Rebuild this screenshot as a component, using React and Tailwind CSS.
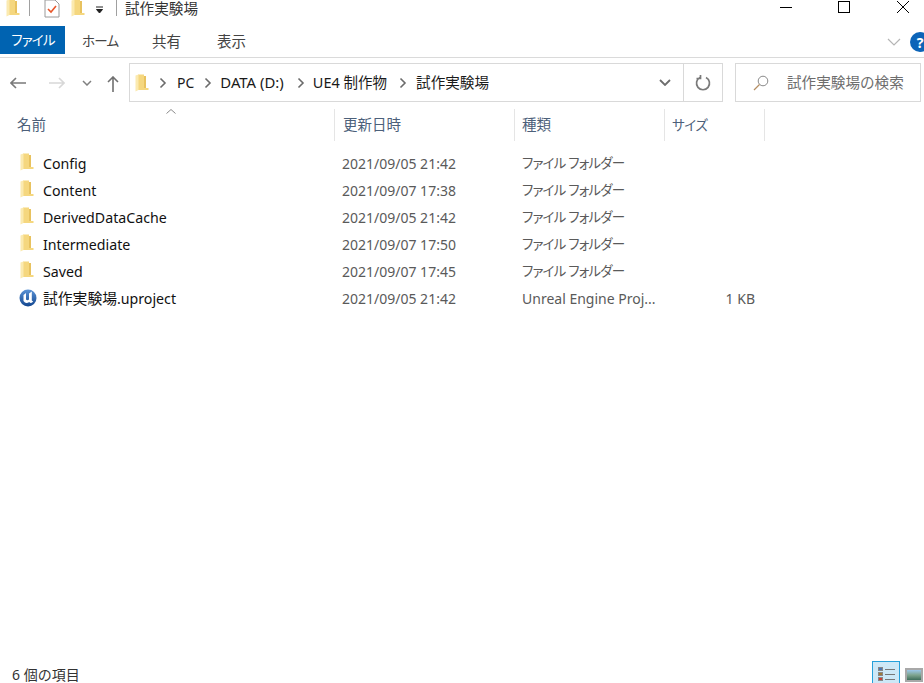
const font = { fontFamily: '"Noto Sans", "Noto Sans CJK JP", sans-serif' };

const rows = [
  { name: 'Config', date: '2021/09/05 21:42', type: 'ファイル フォルダー', kana: true },
  { name: 'Content', date: '2021/09/07 17:38', type: 'ファイル フォルダー', kana: true },
  { name: 'DerivedDataCache', date: '2021/09/05 21:42', type: 'ファイル フォルダー', kana: true },
  { name: 'Intermediate', date: '2021/09/07 17:50', type: 'ファイル フォルダー', kana: true },
  { name: 'Saved', date: '2021/09/07 17:45', type: 'ファイル フォルダー', kana: true },
  { name: '.uproject', prefix: '試作実験場', date: '2021/09/05 21:42', type: 'Unreal Engine Proj...', size: '1 KB', ue: true },
];

const Folder = ({ className = '' }) => (
  <svg viewBox="0 0 14 18" width="14" height="18" className={className}>
    <path d="M3 0.5 L9 0.5 L9 14 L13.5 14 L13.5 16 L3 16 Z" fill="#f5d77f" />
    <path d="M0.5 1.5 L3.5 0.5 L3.5 16 L0.5 17.5 Z" fill="#fbeab0" />
    <path d="M9 2 L11 2 L11 14 L9 14 Z" fill="#e8c25f" />
  </svg>
);

const UeIcon = () => (
  <svg viewBox="0 0 18 18" width="18" height="18">
    <defs>
      <linearGradient id="ue" x1="0" y1="0" x2="0" y2="1">
        <stop offset="0" stopColor="#5b93d6" />
        <stop offset="1" stopColor="#12468f" />
      </linearGradient>
    </defs>
    <circle cx="9" cy="9" r="8.5" fill="url(#ue)" />
    <path d="M4.5 6 L7 4 L7 10.5 Q8.4 12 10 10.5 L10 4.5 L12.8 2.6 L12.8 11.5 L14.2 12.6 Q12 15.2 10.2 13 Q6.8 15.4 4.5 12 Z" fill="#fff" />
  </svg>
);

const Chevron = () => (
  <svg viewBox="0 0 8 12" width="8" height="12" className="shrink-0">
    <path d="M1.5 1.5 L6 6 L1.5 10.5" fill="none" stroke="#6b6b6b" strokeWidth="1.6" />
  </svg>
);

const App = () => {
  return (
    <div className="w-[924px] h-[683px] bg-white overflow-hidden flex flex-col text-[14px] text-[#1a1a1a]" style={font}>
      {/* Title bar */}
      <div className="h-[26px] flex items-start shrink-0">
        <Folder className="ml-[6px] -mt-[1px]" />
        <div className="w-px h-[16px] bg-[#a0a0a0] ml-[9px]" />
        <svg viewBox="0 0 16 18" width="16" height="18" className="ml-[14px]">
          <path d="M1 0 L11 0 L15 4 L15 17 L1 17 Z" fill="#fff" stroke="#9a9a9a" />
          <path d="M4 9 L7 12 L12 6" fill="none" stroke="#e8562a" strokeWidth="1.6" />
        </svg>
        <Folder className="ml-[11px] -mt-[1px]" />
        <svg viewBox="0 0 8 8" width="8" height="8" className="ml-[11px] mt-[6px]">
          <path d="M0 1 H7 M0.5 3.5 H6.5 L3.5 7 Z" stroke="#222" fill="#222" strokeWidth="1" />
        </svg>
        <div className="w-px h-[16px] bg-[#a0a0a0] ml-[12px]" />
        <span className="ml-[8px] text-[14.6px] leading-[17px] text-[#333]">試作実験場</span>
        <div className="ml-auto flex items-start pt-[1px]">
          <div className="w-[12px] h-px bg-black mt-[6px] mr-[46px]" />
          <div className="w-[12px] h-[12px] border border-black mr-[47px]" />
          <svg viewBox="0 0 12 12" width="12" height="12" className="mr-[15px]">
            <path d="M0 0 L12 12 M12 0 L0 12" stroke="#000" strokeWidth="1" />
          </svg>
        </div>
      </div>

      {/* Ribbon tabs */}
      <div className="h-[32px] flex items-start border-b border-[#dadada] shrink-0">
        <div className="w-[62px] h-[28px] pr-[1px] box-content pl-[2px] bg-[#0063b1] text-white flex items-center justify-center text-[13.5px] tracking-[-0.8px] [font-feature-settings:'palt']">ファイル</div>
        <span className="w-[87px] pl-[17px] leading-[30px] text-[13.5px] tracking-[-0.8px] text-[#444] [font-feature-settings:'palt']">ホーム</span>
        <span className="w-[65px] leading-[30px] text-[14.5px] text-[#444]">共有</span>
        <span className="leading-[30px] text-[14.5px] text-[#444]">表示</span>
        <svg viewBox="0 0 14 8" width="14" height="8" className="ml-auto mt-[12px] mr-[9px]">
          <path d="M1 1 L7 7 L13 1" fill="none" stroke="#b5b5b5" strokeWidth="1.2" />
        </svg>
        <div className="w-[20px] h-[20px] rounded-full bg-[#0c64b8] text-white flex items-center justify-center text-[14px] font-bold mt-[6px] -mr-[6px]">?</div>
      </div>

      {/* Address bar */}
      <div className="h-[49px] flex items-center shrink-0">
        <svg viewBox="0 0 16 12" width="16" height="12" className="ml-[10px]">
          <path d="M6 1 L1 6 L6 11 M1 6 H16" fill="none" stroke="#7a7a7a" strokeWidth="1.6" />
        </svg>
        <svg viewBox="0 0 16 12" width="16" height="12" className="ml-[23px]">
          <path d="M10 1 L15 6 L10 11 M0 6 H15" fill="none" stroke="#d8d8d8" strokeWidth="1.6" />
        </svg>
        <svg viewBox="0 0 10 6" width="10" height="6" className="ml-[17px]">
          <path d="M1 1 L5 5 L9 1" fill="none" stroke="#808080" strokeWidth="1.5" />
        </svg>
        <svg viewBox="0 0 12 16" width="12" height="16" className="ml-[15px] mt-[3px]">
          <path d="M1 6 L6 1 L11 6 M6 1 V16" fill="none" stroke="#707070" strokeWidth="1.6" />
        </svg>
        <div className="ml-[10px] w-[594px] h-[39px] border border-[#d9d9d9] flex items-center">
          <Folder className="ml-[5px] shrink-0" />
          <div className="ml-[10px]"><Chevron /></div>
          <span className="ml-[10px]">PC</span>
          <div className="ml-[10px]"><Chevron /></div>
          <span className="ml-[8px] text-[14.9px]">DATA (D:)</span>
          <div className="ml-[13px]"><Chevron /></div>
          <span className="ml-[8px] text-[14.5px]">UE4 制作物</span>
          <div className="ml-[12px]"><Chevron /></div>
          <span className="ml-[9px] text-[14.6px]">試作実験場</span>
          <svg viewBox="0 0 12 7" width="12" height="7" className="ml-auto mr-[12px]">
            <path d="M1 1 L6 6 L11 1" fill="none" stroke="#6d6d6d" strokeWidth="1.8" />
          </svg>
          <div className="w-[39px] h-full border-l border-[#d9d9d9] flex items-center justify-center">
            <svg viewBox="0 0 16 16" width="16" height="16">
              <path d="M5 2.5 A6.5 6.5 0 1 0 11 2.5 M5.5 0 V3.5 H1.5" fill="none" stroke="#7a7a7a" strokeWidth="1.7" />
            </svg>
          </div>
        </div>
        <div className="ml-[12px] w-[186px] h-[39px] border border-[#d9d9d9] flex items-center">
          <svg viewBox="0 0 16 16" width="16" height="16" className="ml-[17px]">
            <circle cx="10" cy="6" r="4.8" fill="none" stroke="#8a8a8a" />
            <path d="M6.5 9.5 L1 15" stroke="#b58f63" strokeWidth="1.2" />
          </svg>
          <span className="ml-[18px] text-[#6d6d6d] text-[14.6px]">試作実験場の検索</span>
        </div>
      </div>

      {/* Column headers */}
      <div className="h-[32px] mt-[2px] flex items-center text-[#4c607a] text-[14.5px] relative shrink-0">
        <svg viewBox="0 0 10 5" width="10" height="5" className="absolute left-[166px] top-0">
          <path d="M0.5 4.5 L5 0.5 L9.5 4.5" fill="none" stroke="#8a8a8a" />
        </svg>
        <div className="w-[334px] pl-[17px] h-full flex items-center">名前</div>
        <div className="w-[180px] pl-[8px] h-full flex items-center border-l border-[#e5e5e5]">更新日時</div>
        <div className="w-[150px] pl-[7px] h-full flex items-center border-l border-[#e5e5e5]">種類</div>
        <div className="w-[101px] pl-[7px] h-full flex items-center border-x border-[#e5e5e5] text-[13.5px] tracking-[-0.4px] [font-feature-settings:'palt']">サイズ</div>
      </div>

      {/* File list */}
      <div className="flex-1 pt-[9px]">
        {rows.map((row) => (
          <div key={row.name} className="h-[27px] flex items-center">
            <div className="w-[334px] flex items-center">
              <div className="w-[18px] h-[18px] ml-[19px] flex items-center justify-start shrink-0">
                {row.ue ? <UeIcon /> : <Folder className="ml-px -mt-[3px]" />}
              </div>
              <span className="ml-[6px] text-[14.2px] text-[#111]">
                {row.prefix && <span className="text-[14.8px]">{row.prefix}</span>}
                {row.name}
              </span>
            </div>
            <div className="w-[180px] pl-[8px] text-[#5a5a5a]">{row.date}</div>
            <div className={row.kana ? "w-[150px] pl-[8px] text-[13.5px] tracking-[-0.8px] text-[#5a5a5a] [font-feature-settings:'palt']" : 'w-[150px] pl-[8px] text-[#5a5a5a]'}>{row.type}</div>
            <div className="w-[91px] text-right text-[#5a5a5a]">{row.size}</div>
          </div>
        ))}
      </div>

      {/* Status bar */}
      <div className="h-[22px] flex items-start shrink-0">
        <span className="ml-[12px] text-[14px] leading-[16px] mt-[6px] text-[#333]">6 個の項目</span>
        <div className="ml-auto w-[28px] h-[24px] bg-[#cde8f7] border border-[#26a0da] flex flex-col gap-[1px] pl-[5px] pt-[5px] mr-[5px]">
          {['#4a78b5', '#a07a3a', '#d04030'].map((c) => (
            <div key={c} className="flex items-center gap-[2px]">
              <div className="w-[5px] h-[4px] border border-[#888]" style={{ backgroundColor: c }} />
              <div className="w-[10px] h-px bg-[#777]" />
            </div>
          ))}
        </div>
        <div className="w-[18px] h-[14px] mt-[7px] mr-[1px] border-2 border-[#a8a8a8] bg-gradient-to-b from-[#9cc7ea] via-[#7fa58f] to-[#3f6f5c]" />
      </div>
    </div>
  );
};

export default App;
